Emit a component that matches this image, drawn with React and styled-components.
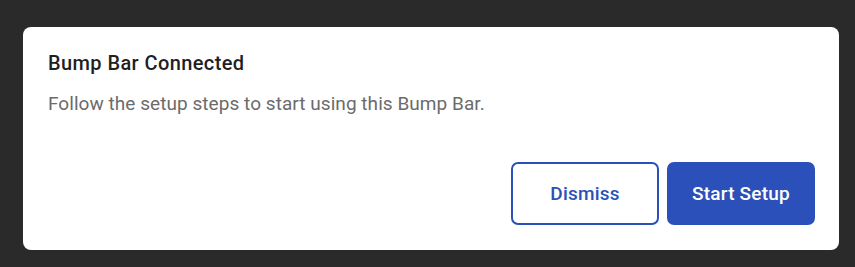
import styled, { createGlobalStyle } from "styled-components"

const GlobalStyle = createGlobalStyle`
  html, body {
    margin: 0;
    padding: 0;
    background: #2a2a2a;
  }
  body {
    font-family: Roboto, "Noto Sans", "Liberation Sans", sans-serif;
    -webkit-font-smoothing: antialiased;
  }
`;

function App() {
  return (
    <>
      <GlobalStyle />
      <Backdrop>
        <Dialog>
          <Title>Bump Bar Connected</Title>
          <Message>Follow the setup steps to start using this Bump Bar.</Message>
          <Actions>
            <Button>Dismiss</Button>
            <Button primary>Start Setup</Button>
          </Actions>
        </Dialog>
      </Backdrop>
    </>
  );
}

export default App;

const Backdrop = styled.div`
  width: 855px;
  height: 267px;
  box-sizing: border-box;
  padding: 27px 16px 17px 23px;
  background: #2a2a2a;
`;

const Dialog = styled.div`
  height: 100%;
  box-sizing: border-box;
  background: #ffffff;
  border-radius: 8px;
  padding: 23px 24px 25px 25px;
  display: flex;
  flex-direction: column;
`;

const Title = styled.h2`
  margin: 0;
  font-size: 20px;
  font-weight: 500;
  line-height: 26px;
  letter-spacing: 0.4px;
  color: #1f1f1f;
`;

const Message = styled.p`
  margin: 15px 0 0;
  font-size: 19px;
  font-weight: 400;
  line-height: 26px;
  letter-spacing: 0.05px;
  color: #6b6b6b;
`;

const Actions = styled.div`
  margin-top: auto;
  display: flex;
  justify-content: flex-end;
  gap: 8px;
`;

const Button = styled.button`
  width: 148px;
  height: 63px;
  box-sizing: border-box;
  border-radius: 7px;
  border: 2px solid #2b50b9;
  background: ${p => (p.primary ? "#2b50b9" : "#ffffff")};
  color: ${p => (p.primary ? "#ffffff" : "#2b50b9")};
  font-family: inherit;
  font-size: 19px;
  font-weight: 500;
  letter-spacing: 0.2px;
  cursor: pointer;
`;
